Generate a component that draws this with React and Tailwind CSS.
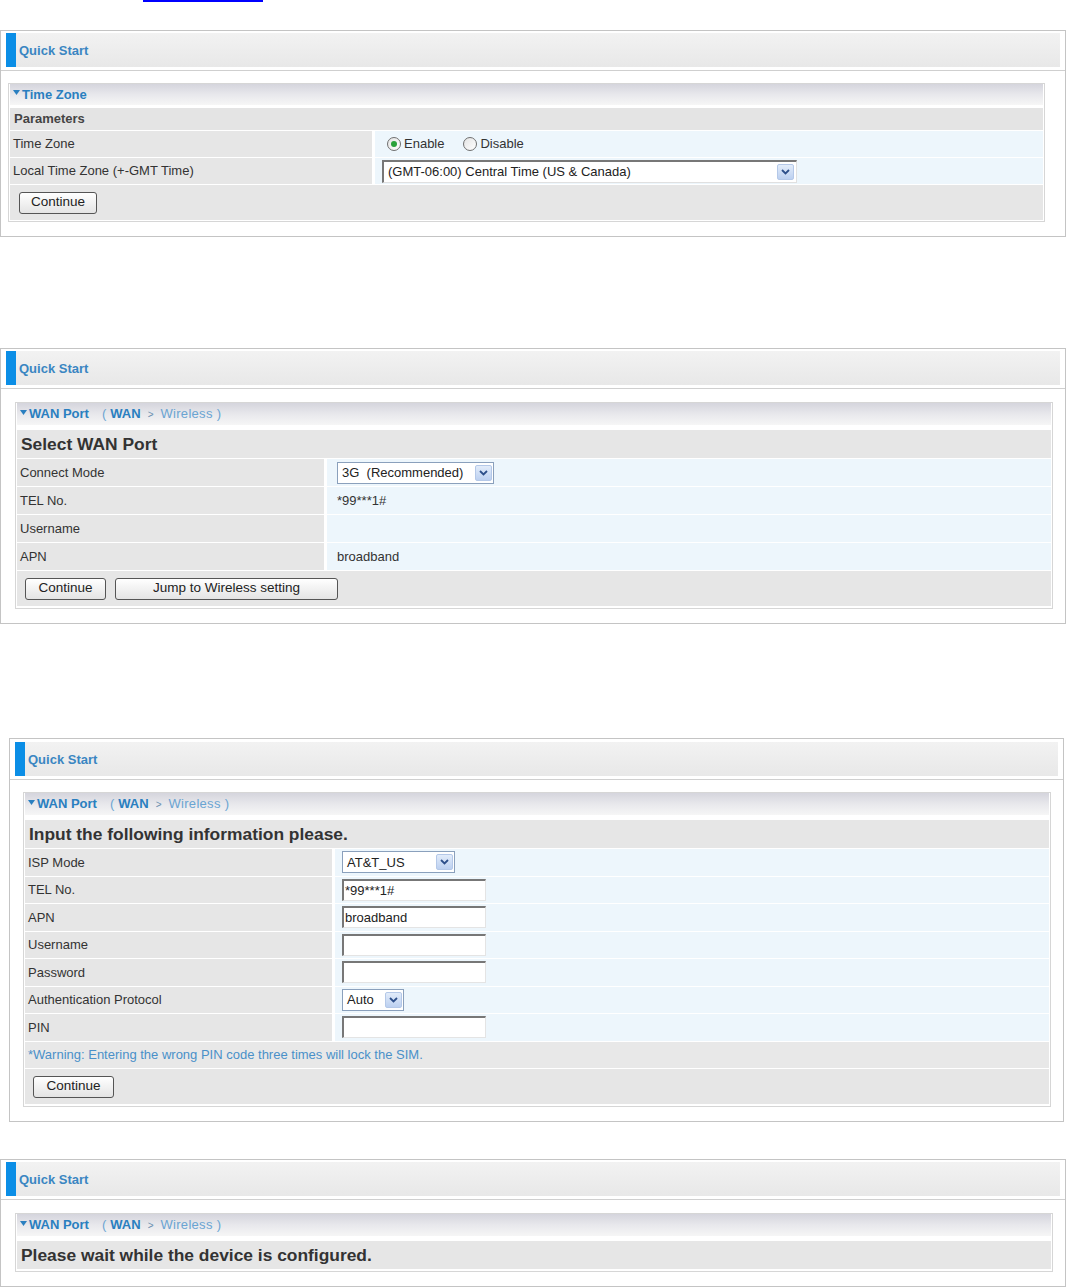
import React from "react";

const font = "font-['Liberation_Sans',Arial,sans-serif]";

function Chevron() {
  return (
    <svg width="9" height="6" viewBox="0 0 9 6">
      <path d="M1 1 L4.5 4.5 L8 1" fill="none" stroke="#2d4f8a" strokeWidth="1.8" />
    </svg>
  );
}

function Arrow() {
  return (
    <span className="flex h-[16px] w-[17px] items-center justify-center rounded-[2px] border border-[#b4c8e8] bg-gradient-to-b from-[#e2ecfa] to-[#bcd0f0]">
      <Chevron />
    </span>
  );
}

function Select({ w, children }) {
  return (
    <div className={`flex h-[22px] ${w} items-center justify-between border border-[#8aa0bc] bg-white pl-[4px] pr-[1px] text-[13px] text-[#222]`}>
      <span>{children}</span>
      <Arrow />
    </div>
  );
}

function TextInput({ value }) {
  return (
    <div className="flex h-[22px] w-[144px] items-center border-l-2 border-t-2 border-b border-r border-l-[#777] border-t-[#777] border-b-[#e4e4e4] border-r-[#e4e4e4] bg-white pl-[1px] text-[13px] text-[#222]">
      {value}
    </div>
  );
}

function Button({ w, children }) {
  return (
    <div className={`flex h-[22px] ${w} items-center justify-center rounded-[3px] border border-[#555] bg-gradient-to-b from-white to-[#e4e4e4] text-[13.5px] text-[#222]`}>
      {children}
    </div>
  );
}

function Radio({ checked, label }) {
  return (
    <span className="flex items-center gap-[3px]">
      <span className="flex h-[14px] w-[14px] items-center justify-center rounded-full border border-[#6f6f6f] bg-gradient-to-br from-[#e4e4e4] to-white">
        {checked && <span className="h-[6px] w-[6px] rounded-full bg-[#2aa23a]" />}
      </span>
      <span>{label}</span>
    </span>
  );
}

function Header() {
  return (
    <>
      <div className="mx-[5px] flex h-[34px] bg-gradient-to-b from-[#f2f2f2] to-[#e8e8e8]">
        <div className="w-[10px] bg-[#0b8ee6]" />
        <div className="flex items-center pl-[3px] pt-[1px] text-[13px] font-bold text-[#3a86c2]">Quick Start</div>
      </div>
      <div className="mt-[3px] h-px bg-[#cfcfcf]" />
    </>
  );
}

function SectionHead({ h = "h-[21px]", children }) {
  return (
    <div className={`flex ${h} items-center bg-gradient-to-b from-[#d5d5dd] via-[#e8e8ec] to-[#f6f6f6] pl-[3px] text-[13px]`}>
      <svg width="7" height="5" viewBox="0 0 7 5" className="mr-[2px] mb-[4px]">
        <path d="M0 0 H7 L3.5 5 Z" fill="#2a7fc0" />
      </svg>
      {children}
    </div>
  );
}

function WanHead() {
  return (
    <SectionHead h="h-[22px]">
      <span className="font-bold text-[#2a7fc0]">WAN Port</span>
      <span className="ml-[13px] text-[#6aa4d2]">(</span>
      <span className="ml-[4px] font-bold text-[#2a7fc0]">WAN</span>
      <span className="mx-[7px] text-[10px] text-[#6a8fb0]">&gt;</span>
      <span className="tracking-[0.3px] text-[#6aa4d2]">Wireless )</span>
    </SectionHead>
  );
}

function Row({ label, labelW, h, children }) {
  return (
    <div className={`flex ${h} gap-[3px]`}>
      <div className={`flex ${labelW} shrink-0 items-center bg-[#e6e6e6] pl-[3px] text-[13px] text-[#333]`}>{label}</div>
      <div className="flex flex-1 items-center bg-[#edf6fc] pl-[10px] text-[13px] text-[#333]">{children}</div>
    </div>
  );
}

function Title({ children }) {
  return (
    <div className="flex h-[28px] items-center bg-[#e6e6e6] pl-[4px] text-[17.4px] font-bold text-[#333]">{children}</div>
  );
}

export default function App() {
  return (
    <div className={`${font} w-[1067px] bg-white pb-[1px]`}>
      <div className="ml-[143px] h-[2px] w-[120px] bg-[#0000ff]" />

      {/* Time zone */}
      <div className="mt-[28px] w-[1066px] border border-[#c4c4c4] pt-[2px] pb-[14px]">
        <Header />
        <div className="ml-[7px] mt-[12px] w-[1037px] border border-[#d6d6d6] px-[1px] pb-[1px]">
          <SectionHead>
            <span className="font-bold text-[#2a7fc0]">Time Zone</span>
          </SectionHead>
          <div className="mt-[3px] flex flex-col gap-px">
            <div className="flex h-[22px] items-center bg-[#e4e4e4] pl-[4px] text-[13px] font-bold text-[#444]">Parameters</div>
            <Row label="Time Zone" labelW="w-[362px]" h="h-[26px]">
              <span className="ml-[2px] flex items-center gap-[19px]">
                <Radio checked label="Enable" />
                <Radio label="Disable" />
              </span>
            </Row>
            <Row label="Local Time Zone (+-GMT Time)" labelW="w-[362px]" h="h-[26px]">
              <div className="-ml-[3px] flex h-[23px] w-[415px] items-center justify-between border-l-2 border-t-2 border-b border-r border-l-[#777] border-t-[#777] border-b-[#e0e0e0] border-r-[#e0e0e0] bg-white pl-[4px] pr-[2px] text-[13px] text-[#222]">
                <span>(GMT-06:00) Central Time (US &amp; Canada)</span>
                <Arrow />
              </div>
            </Row>
            <div className="flex h-[35px] items-center bg-[#e6e6e6] pl-[9px]">
              <Button w="w-[78px]">Continue</Button>
            </div>
          </div>
        </div>
      </div>

      {/* Select WAN port */}
      <div className="mt-[111px] w-[1066px] border border-[#c4c4c4] pt-[2px] pb-[14px]">
        <Header />
        <div className="ml-[14px] mt-[13px] w-[1038px] border border-[#d6d6d6] px-[1px] pb-[2px]">
          <WanHead />
          <div className="mt-[5px] flex flex-col gap-px">
            <Title>Select WAN Port</Title>
            <Row label="Connect Mode" labelW="w-[307px]" h="h-[27px]">
              <Select w="w-[157px]">3G&nbsp; (Recommended)</Select>
            </Row>
            <Row label="TEL No." labelW="w-[307px]" h="h-[27px]">*99***1#</Row>
            <Row label="Username" labelW="w-[307px]" h="h-[27px]"></Row>
            <Row label="APN" labelW="w-[307px]" h="h-[27px]">broadband</Row>
            <div className="flex h-[35px] items-center gap-[9px] bg-[#e6e6e6] pl-[8px]">
              <Button w="w-[81px]">Continue</Button>
              <Button w="w-[223px]">Jump to Wireless setting</Button>
            </div>
          </div>
        </div>
      </div>

      {/* Input info */}
      <div className="ml-[9px] mt-[114px] w-[1055px] border border-[#c4c4c4] pt-[3px] pb-[14px]">
        <Header />
        <div className="ml-[13px] mt-[12px] w-[1028px] border border-[#d6d6d6] px-[1px] pb-[2px]">
          <WanHead />
          <div className="mt-[5px] flex flex-col gap-px">
            <Title>Input the following information please.</Title>
            <Row label="ISP Mode" labelW="w-[307px]" h="h-[26.5px]">
              <span className="-ml-[3px]"><Select w="w-[113px]">AT&amp;T_US</Select></span>
            </Row>
            <Row label="TEL No." labelW="w-[307px]" h="h-[26.5px]">
              <span className="-ml-[3px]"><TextInput value="*99***1#" /></span>
            </Row>
            <Row label="APN" labelW="w-[307px]" h="h-[26.5px]">
              <span className="-ml-[3px]"><TextInput value="broadband" /></span>
            </Row>
            <Row label="Username" labelW="w-[307px]" h="h-[26.5px]">
              <span className="-ml-[3px]"><TextInput value="" /></span>
            </Row>
            <Row label="Password" labelW="w-[307px]" h="h-[26.5px]">
              <span className="-ml-[3px]"><TextInput value="" /></span>
            </Row>
            <Row label="Authentication Protocol" labelW="w-[307px]" h="h-[26.5px]">
              <span className="-ml-[3px]"><Select w="w-[62px]">Auto</Select></span>
            </Row>
            <Row label="PIN" labelW="w-[307px]" h="h-[26.5px]">
              <span className="-ml-[3px]"><TextInput value="" /></span>
            </Row>
            <div className="flex h-[26.5px] items-center bg-[#e8e8e8] pl-[3px] text-[13px] text-[#4a90c8]">
              *Warning: Entering the wrong PIN code three times will lock the SIM.
            </div>
            <div className="flex h-[35px] items-center bg-[#e6e6e6] pl-[8px]">
              <Button w="w-[81px]">Continue</Button>
            </div>
          </div>
        </div>
      </div>

      {/* Please wait */}
      <div className="mt-[37px] w-[1066px] border border-[#c4c4c4] pt-[2px] pb-[14px]">
        <Header />
        <div className="ml-[14px] mt-[13px] w-[1038px] border border-[#d6d6d6] px-[1px] pb-[2px]">
          <WanHead />
          <div className="mt-[5px]">
            <Title>Please wait while the device is configured.</Title>
          </div>
        </div>
      </div>
    </div>
  );
}
